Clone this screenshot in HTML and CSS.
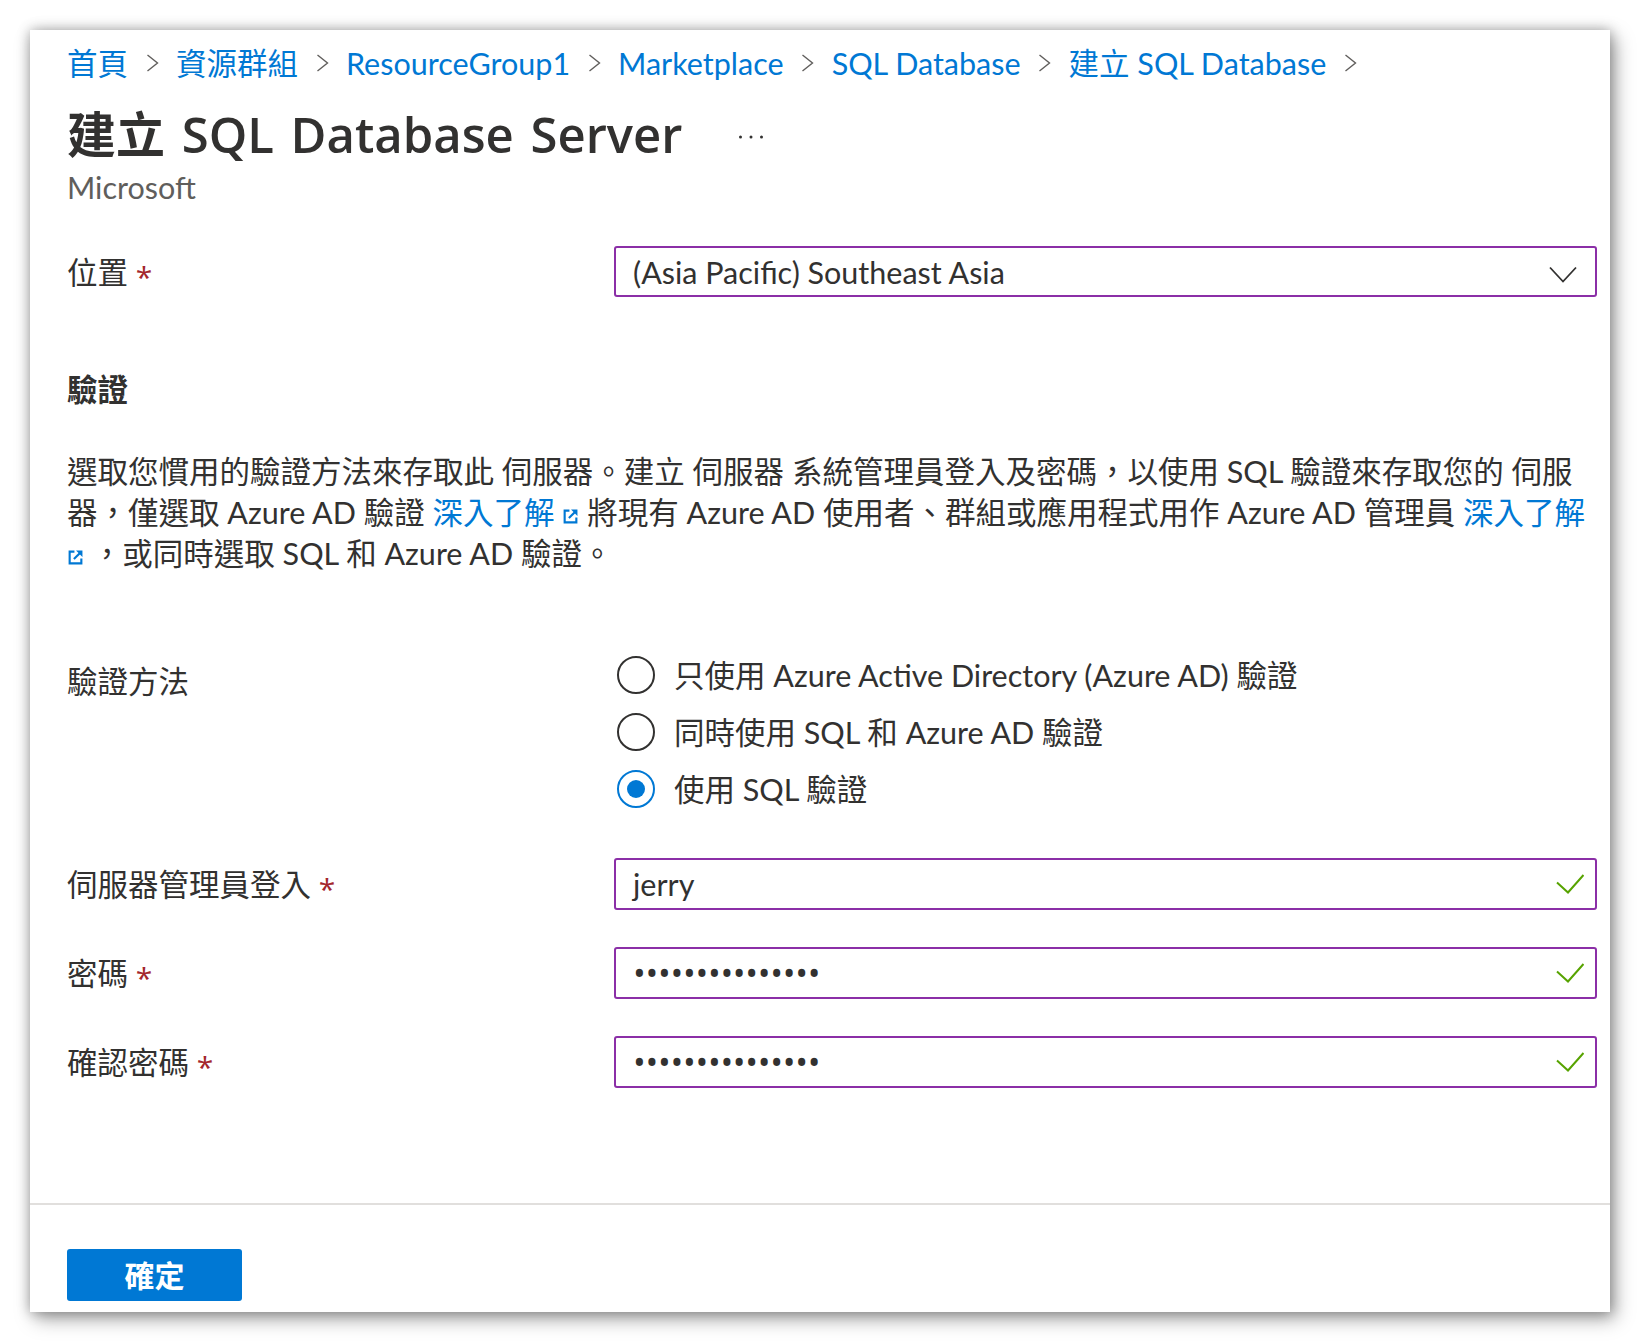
FILE: index.html
```html
<!DOCTYPE html>
<html lang="zh-Hant">
<head>
<meta charset="utf-8">
<title>建立 SQL Database Server</title>
<link rel="stylesheet" href="styles.css">
</head>
<body>
<div class="card">
  <div class="card-body">
    <nav class="breadcrumb">
      <a href="#">首頁</a>
      <svg class="crumb-sep" viewBox="0 0 13 18"><polyline points="1.5,1 11.5,9 1.5,17"/></svg>
      <a href="#">資源群組</a>
      <svg class="crumb-sep" viewBox="0 0 13 18"><polyline points="1.5,1 11.5,9 1.5,17"/></svg>
      <a href="#">ResourceGroup1</a>
      <svg class="crumb-sep" viewBox="0 0 13 18"><polyline points="1.5,1 11.5,9 1.5,17"/></svg>
      <a href="#">Marketplace</a>
      <svg class="crumb-sep" viewBox="0 0 13 18"><polyline points="1.5,1 11.5,9 1.5,17"/></svg>
      <a href="#">SQL Database</a>
      <svg class="crumb-sep" viewBox="0 0 13 18"><polyline points="1.5,1 11.5,9 1.5,17"/></svg>
      <a href="#">建立 SQL Database</a>
      <svg class="crumb-sep" viewBox="0 0 13 18"><polyline points="1.5,1 11.5,9 1.5,17"/></svg>
    </nav>

    <div class="title-row">
      <h1 class="title">建立 SQL Database Server</h1>
      <svg class="more" viewBox="0 0 26 6"><circle cx="2.5" cy="3" r="1.5"/><circle cx="13" cy="3" r="1.5"/><circle cx="23.5" cy="3" r="1.5"/></svg>
    </div>
    <div class="subtitle">Microsoft</div>

    <div class="row row-location">
      <div class="label">位置 <span class="req">*</span></div>
      <div class="field">
        <div class="select">
          <span class="value">(Asia Pacific) Southeast Asia</span>
          <svg class="chev-down" viewBox="0 0 28 17"><polyline points="1,1.5 14,15.5 27,1.5"/></svg>
        </div>
      </div>
    </div>

    <h2 class="section-title">驗證</h2>
    <p class="desc">選取您慣用的驗證方法來存取此 伺服器。建立 伺服器 系統管理員登入及密碼，以使用 SQL 驗證來存取您的 伺服器，僅選取 Azure AD 驗證 <a class="link" href="#">深入了解 <svg class="ext" viewBox="0 0 16 16"><path class="ext-box" d="M7 2.5H2.5v11h11V9"/><path class="ext-line" d="M6.5 9.5L12.5 3.5"/><path class="ext-head" d="M8.5 1.5h6v6z"/></svg></a> 將現有 Azure AD 使用者、群組或應用程式用作 Azure AD 管理員 <a class="link" href="#">深入了解 <svg class="ext" viewBox="0 0 16 16"><path class="ext-box" d="M7 2.5H2.5v11h11V9"/><path class="ext-line" d="M6.5 9.5L12.5 3.5"/><path class="ext-head" d="M8.5 1.5h6v6z"/></svg></a>&nbsp;，或同時選取 SQL 和 Azure AD 驗證。</p>

    <div class="row row-radios">
      <div class="label">驗證方法</div>
      <div class="field radios">
        <div class="radio"><span class="radio-circle"></span><span class="radio-text">只使用 Azure Active Directory (Azure AD) 驗證</span></div>
        <div class="radio"><span class="radio-circle"></span><span class="radio-text">同時使用 SQL 和 Azure AD 驗證</span></div>
        <div class="radio checked"><span class="radio-circle"><span class="radio-dot"></span></span><span class="radio-text">使用 SQL 驗證</span></div>
      </div>
    </div>

    <div class="row row-input first">
      <div class="label">伺服器管理員登入 <span class="req">*</span></div>
      <div class="field">
        <div class="input">
          <span class="value">jerry</span>
          <svg class="check" viewBox="0 0 28 20"><polyline points="1,8.5 12,18.5 27.5,1"/></svg>
        </div>
      </div>
    </div>

    <div class="row row-input">
      <div class="label">密碼 <span class="req">*</span></div>
      <div class="field">
        <div class="input">
          <span class="value dots">•••••••••••••••</span>
          <svg class="check" viewBox="0 0 28 20"><polyline points="1,8.5 12,18.5 27.5,1"/></svg>
        </div>
      </div>
    </div>

    <div class="row row-input">
      <div class="label">確認密碼 <span class="req">*</span></div>
      <div class="field">
        <div class="input">
          <span class="value dots">•••••••••••••••</span>
          <svg class="check" viewBox="0 0 28 20"><polyline points="1,8.5 12,18.5 27.5,1"/></svg>
        </div>
      </div>
    </div>
  </div>

  <div class="footer">
    <button class="primary" type="button">確定</button>
  </div>
</div>
</body>
</html>
```

FILE: styles.css
```css
* {
  box-sizing: border-box;
}

html,
body {
  margin: 0;
  background: #ffffff;
}

body {
  padding: 30px 0 30px 30px;
  font-family: Lato, "Noto Sans CJK TC", sans-serif;
  font-size: 30.5px;
  color: #323130;
}

.card {
  width: 1580px;
  height: 1282px;
  background: #ffffff;
  display: flex;
  flex-direction: column;
  box-shadow: 0 0 12px rgba(0, 0, 0, 0.3), 5px 7px 18px rgba(0, 0, 0, 0.35);
}

.card-body {
  flex: 1;
  padding: 13px 13px 0 37px;
}

/* breadcrumb */
.breadcrumb {
  display: flex;
  align-items: center;
  height: 40px;
  font-size: 30.5px;
  line-height: 40px;
}

.breadcrumb a {
  color: #0078d4;
  text-decoration: none;
  white-space: nowrap;
}

.crumb-sep {
  flex: none;
  width: 13px;
  height: 18px;
  margin: 0 17.5px;
  fill: none;
  stroke: #605e5c;
  stroke-width: 1.4;
}

/* title */
.title-row {
  display: flex;
  align-items: center;
  height: 60px;
  margin-top: 21px;
}

.title {
  margin: 0;
  font-family: "Open Sans", "Noto Sans CJK TC", sans-serif;
  font-size: 49px;
  font-weight: 600;
  line-height: 60px;
  word-spacing: 4px;
  white-space: nowrap;
}

.more {
  flex: none;
  width: 26px;
  height: 6px;
  margin: 6px 0 0 56px;
  fill: #323130;
}

.subtitle {
  margin-top: 3px;
  line-height: 40px;
  color: #605e5c;
}

/* form rows */
.row {
  display: flex;
  align-items: center;
}

.label {
  flex: none;
  width: 547px;
  line-height: 40px;
  white-space: nowrap;
}

.req {
  font-family: "Open Sans", sans-serif;
  font-size: 30px;
  color: #a4262c;
  vertical-align: -4px;
  line-height: 1;
}

.field {
  flex: 1;
  min-width: 0;
}

.row-location {
  margin-top: 39px;
}

.select,
.input {
  display: flex;
  align-items: center;
  border: 2px solid #8b2fa7;
  border-radius: 3px;
  background: #ffffff;
  line-height: 40px;
}

.select {
  height: 51px;
  padding: 0 18px 0 17px;
}

.input {
  height: 52px;
  padding: 0 11px 0 17px;
}

.value {
  flex: 1;
  white-space: nowrap;
}

.dots {
  font-family: "Open Sans", sans-serif;
  font-size: 34px;
  letter-spacing: -0.3px;
}

.chev-down {
  flex: none;
  width: 28px;
  height: 17px;
  margin-top: 6px;
  fill: none;
  stroke: #323130;
  stroke-width: 1.8;
}

.check {
  flex: none;
  width: 28px;
  height: 20px;
  fill: none;
  stroke: #57a300;
  stroke-width: 2;
}

/* authentication section */
.section-title {
  margin: 72px 0 0;
  font-size: 30.5px;
  font-weight: 700;
  line-height: 40px;
}

.desc {
  margin: 42px 0 0;
  line-height: 41px;
}

.link {
  color: #0078d4;
  text-decoration: none;
}

.ext {
  width: 17px;
  height: 17px;
  vertical-align: middle;
}

.ext-box,
.ext-line {
  fill: none;
  stroke: currentColor;
  stroke-width: 2;
}

.ext-head {
  fill: currentColor;
}

.row-radios {
  align-items: flex-start;
  margin-top: 72px;
}

.row-radios .label {
  margin-top: 15px;
}

.radio {
  display: flex;
  align-items: center;
  height: 57px;
}

.radio-circle {
  flex: none;
  display: flex;
  align-items: center;
  justify-content: center;
  width: 38px;
  height: 38px;
  margin-left: 3px;
  border: 2px solid #323130;
  border-radius: 50%;
}

.radio.checked .radio-circle {
  border-color: #0078d4;
}

.radio-dot {
  width: 18px;
  height: 18px;
  border-radius: 50%;
  background: #0078d4;
}

.radio-text {
  margin-left: 19px;
  line-height: 40px;
  white-space: nowrap;
}

.row-input {
  margin-top: 37px;
}

.row-input.first {
  margin-top: 41px;
}

/* footer */
.footer {
  flex: none;
  border-top: 2px solid #e1dfdd;
  padding: 44px 0 11px 37px;
}

.primary {
  display: block;
  width: 175px;
  height: 52px;
  padding: 0;
  border: none;
  border-radius: 3px;
  background: #0078d4;
  color: #ffffff;
  font-family: Lato, "Noto Sans CJK TC", sans-serif;
  font-size: 30px;
  font-weight: 700;
  line-height: 52px;
}
```
